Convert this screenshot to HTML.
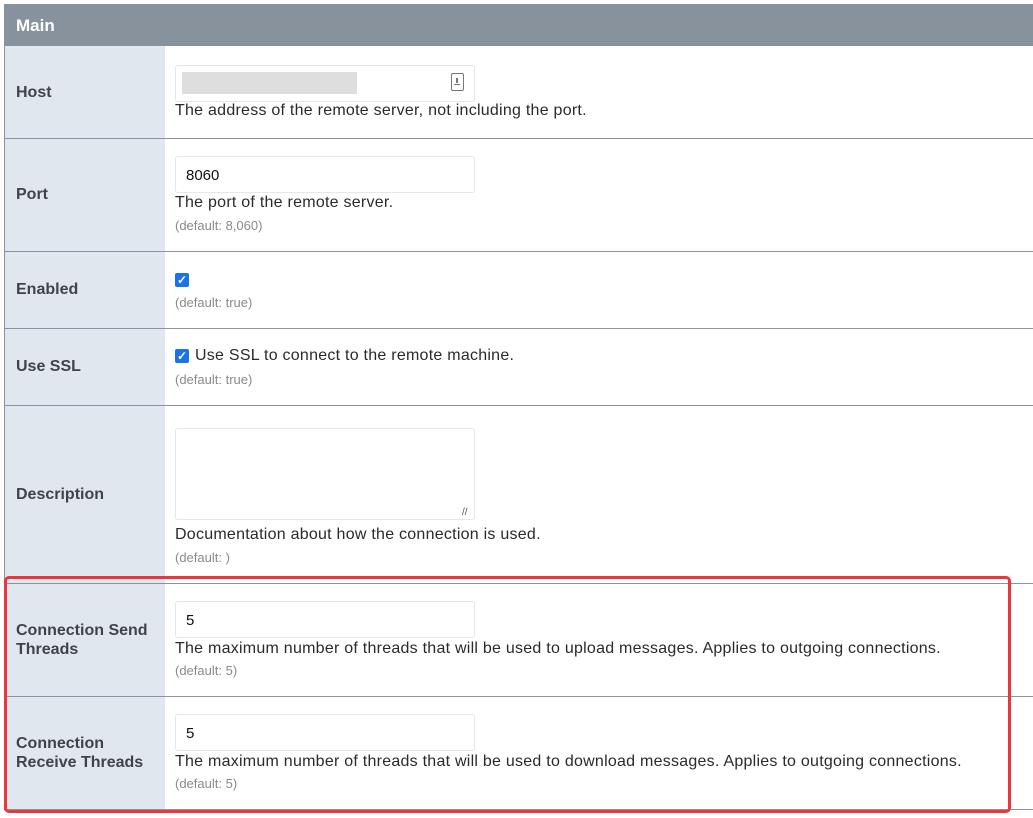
<!DOCTYPE html>
<html><head><style>
body{margin:0;width:1033px;height:818px;background:#fff;position:relative;overflow:hidden;font-family:"Liberation Sans",sans-serif;}
.a{position:absolute}
.hdr{left:4px;top:4px;width:1029px;height:42px;background:#87929c;color:#fff;font-weight:bold;font-size:17px;line-height:44px;text-indent:12px}
.lab{left:5px;width:160px;background:#e1e7ee}
.lt{left:16px;font-weight:bold;font-size:16px;color:#3f444a;line-height:19px}
.sep{left:4px;width:1029px;height:1px;background:#8a949e}
.inp{left:175px;width:298px;height:35px;border:1px solid #e4e7eb;border-radius:3px;background:#fff;font-size:15px;color:#111;line-height:37px;text-indent:10px}
.t{left:175px;font-size:16px;color:#2a2a2a;letter-spacing:0.25px;white-space:nowrap}
.d{left:175px;font-size:13px;color:#8a8a8a;white-space:nowrap}
.cb{left:175px;width:14px;height:14px;background:#1a73e8;border-radius:2px;color:#fff;font-size:12px;line-height:14px;text-align:center;font-weight:bold}
</style></head><body>
<div class="a" style="left:4px;top:4px;width:1px;height:806px;background:#8a949e"></div>
<div class="a hdr">Main</div>
<div class="a lab" style="top:46px;height:763px"></div>

<div class="a lt" style="top:83px">Host</div>
<div class="a inp" style="top:65px"></div>
<div class="a" style="left:182px;top:72px;width:175px;height:22px;background:#dedede"></div>
<div class="a" style="left:451px;top:73px;width:13px;height:18px;border:1.5px solid #777;border-radius:2px;box-sizing:border-box"><div class="a" style="left:4px;top:4px;width:2px;height:5px;background:#777"></div><div class="a" style="left:2px;top:10px;width:6px;height:1px;background:#777"></div></div>
<div class="a t" style="top:102px">The address of the remote server, not including the port.</div>
<div class="a sep" style="top:138px"></div>

<div class="a lt" style="top:185px">Port</div>
<div class="a inp" style="top:156px">8060</div>
<div class="a t" style="top:194px">The port of the remote server.</div>
<div class="a d" style="top:218px">(default: 8,060)</div>
<div class="a sep" style="top:251px"></div>

<div class="a lt" style="top:280px">Enabled</div>
<div class="a cb" style="top:273px">✓</div>
<div class="a d" style="top:295px">(default: true)</div>
<div class="a sep" style="top:328px"></div>

<div class="a lt" style="top:357px">Use SSL</div>
<div class="a cb" style="top:349px">✓</div>
<div class="a t" style="left:195px;top:347px">Use SSL to connect to the remote machine.</div>
<div class="a d" style="top:372px">(default: true)</div>
<div class="a sep" style="top:405px"></div>

<div class="a lt" style="top:485px">Description</div>
<div class="a inp" style="top:428px;height:90px"></div>
<div class="a" style="left:462px;top:507px;font-size:10px;color:#555">//</div>
<div class="a t" style="top:526px">Documentation about how the connection is used.</div>
<div class="a d" style="top:550px">(default: )</div>
<div class="a sep" style="top:583px"></div>

<div class="a lt" style="top:621px">Connection Send<br>Threads</div>
<div class="a inp" style="top:601px">5</div>
<div class="a t" style="top:640px">The maximum number of threads that will be used to upload messages. Applies to outgoing connections.</div>
<div class="a d" style="top:663px">(default: 5)</div>
<div class="a sep" style="top:696px"></div>

<div class="a lt" style="top:734px">Connection<br>Receive Threads</div>
<div class="a inp" style="top:714px">5</div>
<div class="a t" style="top:753px">The maximum number of threads that will be used to download messages. Applies to outgoing connections.</div>
<div class="a d" style="top:776px">(default: 5)</div>
<div class="a sep" style="top:809px"></div>

<div class="a" style="left:4px;top:576px;width:1007px;height:237px;border:3px solid #e8383d;border-radius:5px;box-sizing:border-box"></div>
</body></html>
